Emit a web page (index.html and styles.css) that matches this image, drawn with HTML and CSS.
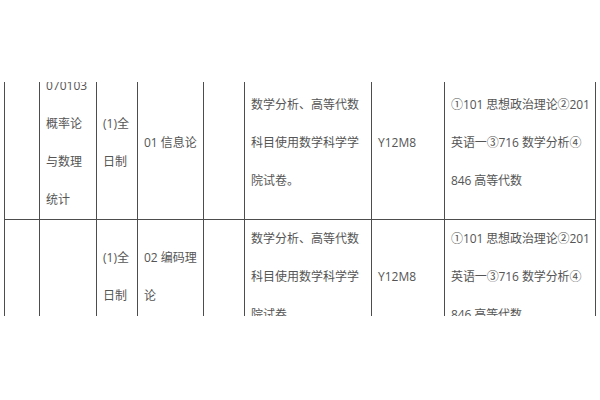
FILE: index.html
```html
<!DOCTYPE html>
<html lang="zh-CN">
<head>
<meta charset="utf-8">
<link rel="stylesheet" href="styles.css">
</head>
<body>
<div class="crop">
  <table class="plan">
    <colgroup>
      <col class="c1"><col class="c2"><col class="c3"><col class="c4">
      <col class="c5"><col class="c6"><col class="c7"><col class="c8">
    </colgroup>
    <tr>
      <td></td>
      <td>070103概率论与数理统计</td>
      <td>(1)全日制</td>
      <td class="dir">01 信息论</td>
      <td></td>
      <td>数学分析、高等代数科目使用数学科学学院试卷。</td>
      <td>Y12M8</td>
      <td class="subj">①101 思想政治理论②201英语一③716 数学分析④<wbr>846 高等代数</td>
    </tr>
    <tr>
      <td></td>
      <td></td>
      <td>(1)全日制</td>
      <td class="dir">02 编码理论</td>
      <td></td>
      <td>数学分析、高等代数科目使用数学科学学院试卷。</td>
      <td>Y12M8</td>
      <td class="subj">①101 思想政治理论②201英语一③716 数学分析④<wbr>846 高等代数</td>
    </tr>
  </table>
</div>
</body>
</html>
```
FILE: styles.css
```css
html, body {
  margin: 0;
  padding: 0;
  background: #ffffff;
}

.crop {
  margin-top: 82px;
  height: 234px;
  overflow: hidden;
  padding-left: 4px;
}

.plan {
  margin-top: -16px;
  border-collapse: collapse;
  table-layout: fixed;
  width: 592px;
  font-family: "Open Sans", "Noto Sans CJK SC", sans-serif;
  font-size: 12px;
  line-height: 38px;
  color: #555555;
}

.plan td {
  border: 1px solid #4d4d4d;
  padding: 0 5px 0 6px;
  vertical-align: middle;
  word-break: normal;
}

.plan td.dir {
  padding-right: 3px;
}

.plan td.subj {
  padding: 0 2px 0 6px;
  letter-spacing: -0.1px;
}

.c1 { width: 35px; }
.c2 { width: 57px; }
.c3 { width: 41px; }
.c4 { width: 66px; }
.c5 { width: 41px; }
.c6 { width: 127px; }
.c7 { width: 73px; }
.c8 { width: 151px; }
```
